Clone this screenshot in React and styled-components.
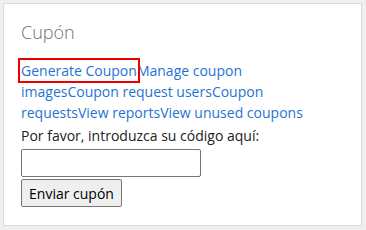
import React from "react";
import styled, { createGlobalStyle } from "styled-components";

const Global = createGlobalStyle`
  html, body { margin: 0; padding: 0; background: #f0f0f0; }
  body { font-family: "Open Sans", "Noto Sans", sans-serif; }
`;

const Panel = styled.div`
  margin: 3px 4px 0 3px;
  height: 223px;
  background: #fff;
  border: 1px solid #dcdcdc;
  padding: 16px 17px 0 17px;
  box-sizing: border-box;
`;

const Title = styled.h2`
  margin: 0 0 16px 0;
  padding-left: 0;
  font-weight: 300;
  font-size: 18px;
  line-height: 24px;
  color: #707070;
`;

const Links = styled.div`
  font-size: 14px;
  line-height: 21px;
`;

const LinkItem = styled.a`
  color: #1f73d4;
  text-decoration: none;
  outline: ${(p) => (p.$focused ? "2px solid #ee0000" : "none")};
  outline-offset: 1px;
`;

const Label = styled.div`
  margin-top: 2px;
  font-size: 14px;
  line-height: 22px;
  color: #222;
`;

const Input = styled.input`
  display: block;
  margin-top: 2px;
  width: 180px;
  height: 28px;
  box-sizing: border-box;
  border: 1px solid #767676;
  border-radius: 2px;
`;

const Button = styled.button`
  display: block;
  margin-top: 2px;
  width: 101px;
  height: 28px;
  box-sizing: border-box;
  border: 1px solid #767676;
  border-radius: 2px;
  background: #efefef;
  font-family: "Open Sans", "Noto Sans", sans-serif;
  font-size: 14px;
  color: #000;
  padding: 0;
`;

export default function App() {
  return (
    <>
      <Global />
      <Panel>
        <Title>Cupón</Title>
        <Links>
          <LinkItem href="#" $focused>Generate Coupon</LinkItem>
          <LinkItem href="#">Manage coupon<br />images</LinkItem>
          <LinkItem href="#">Coupon request users</LinkItem>
          <LinkItem href="#">Coupon<br />requests</LinkItem>
          <LinkItem href="#">View reports</LinkItem>
          <LinkItem href="#">View unused coupons</LinkItem>
        </Links>
        <Label>Por favor, introduzca su código aquí:</Label>
        <Input type="text" />
        <Button>Enviar cupón</Button>
      </Panel>
    </>
  );
}
